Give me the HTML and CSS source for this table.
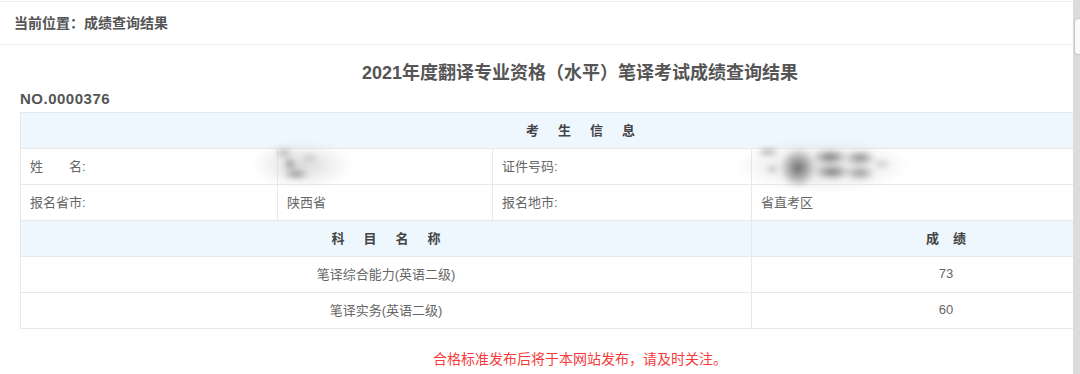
FILE: index.html
```html
<!DOCTYPE html>
<html lang="zh-CN">
<head>
<meta charset="utf-8">
<title>成绩查询结果</title>
<link rel="stylesheet" href="styles.css">
</head>
<body>
<div class="frame">
  <div class="main">
    <div class="inner">
      <div class="crumb">当前位置：成绩查询结果</div>
      <h1 class="title">2021年度翻译专业资格（水平）笔译考试成绩查询结果</h1>
      <div class="serial">NO.0000376</div>
      <table class="result">
        <colgroup>
          <col class="c1"><col class="c2"><col class="c3"><col class="c4">
        </colgroup>
        <tr class="head">
          <th colspan="4"><span class="spaced">考生信息</span></th>
        </tr>
        <tr>
          <td>姓&emsp;&emsp;名:</td>
          <td class="masked"><div class="smudge smudge-name"></div></td>
          <td>证件号码:</td>
          <td class="masked"><div class="smudge smudge-id"></div></td>
        </tr>
        <tr>
          <td>报名省市:</td>
          <td>陕西省</td>
          <td>报名地市:</td>
          <td>省直考区</td>
        </tr>
        <tr class="head">
          <th colspan="3"><span class="spaced">科目名称</span></th>
          <th><span class="spaced-sm">成绩</span></th>
        </tr>
        <tr class="center">
          <td colspan="3">笔译综合能力(英语二级)</td>
          <td>73</td>
        </tr>
        <tr class="center">
          <td colspan="3">笔译实务(英语二级)</td>
          <td>60</td>
        </tr>
      </table>
      <p class="notice">合格标准发布后将于本网站发布，请及时关注。</p>
    </div>
  </div>
  <div class="scrollbar"><div class="thumb"></div></div>
</div>
</body>
</html>
```

FILE: styles.css
```css
* { box-sizing: border-box; }
html, body { margin: 0; padding: 0; background: #fff; }
body {
  font-family: "Liberation Sans", "Noto Sans CJK SC", sans-serif;
  color: #666;
  font-size: 13px;
}
.frame {
  display: flex;
  width: 1080px;
  height: 374px;
  overflow: hidden;
}
.main {
  flex: 1;
  overflow: hidden;
}
.inner {
  width: 1160px;
  padding-top: 1px;
}
.crumb {
  height: 44px;
  border-top: 1px solid #ececec;
  border-bottom: 1px solid #ececec;
  padding-left: 14px;
  line-height: 42px;
  font-size: 14px;
  font-weight: bold;
  color: #555;
}
.title {
  margin: 14px 0 0;
  text-align: center;
  font-size: 18px;
  line-height: 28px;
  font-weight: bold;
  color: #555;
}
.serial {
  margin: 2px 0 0 20px;
  font-size: 15px;
  letter-spacing: 0.5px;
  line-height: 20px;
  font-weight: bold;
  color: #555;
}
.result {
  margin: 3px 0 0 20px;
  width: 1120px;
  table-layout: fixed;
  border-collapse: collapse;
  border: 1px solid #e3e3e3;
}
.c1 { width: 257px; }
.c2 { width: 215px; }
.c3 { width: 259px; }
.c4 { width: 389px; }
.result td, .result th {
  height: 36px;
  padding: 0 9px 2px;
  border: 1px solid #e8e8e8;
  text-align: left;
  font-weight: normal;
  white-space: nowrap;
}
.result tr.head th {
  background: #eef6fe;
  text-align: center;
  font-weight: bold;
  color: #444;
}
.result tr.center td { text-align: center; }
.spaced {
  letter-spacing: 19px;
  padding-left: 19px;
}
.spaced-sm {
  letter-spacing: 14px;
  padding-left: 14px;
}
.masked { position: relative; }
.smudge {
  position: absolute;
  filter: blur(2.5px);
  pointer-events: none;
}
.smudge-name {
  left: -26px;
  top: -9px;
  width: 100px;
  height: 50px;
  background:
    radial-gradient(ellipse 10px 7px at 32px 13px, rgba(150,150,150,0.6), transparent),
    radial-gradient(ellipse 7px 7px at 38px 24px, rgba(130,130,130,0.8), transparent),
    radial-gradient(ellipse 14px 6px at 44px 34px, rgba(120,120,120,0.75), transparent),
    radial-gradient(ellipse 10px 5px at 58px 18px, rgba(170,170,170,0.55), transparent),
    radial-gradient(ellipse 50px 24px at 50px 25px, rgba(215,215,215,0.9), transparent);
}
.smudge-id {
  left: -20px;
  top: -11px;
  width: 180px;
  height: 56px;
  background:
    radial-gradient(ellipse 12px 5px at 36px 14px, rgba(130,130,130,0.65), transparent),
    radial-gradient(ellipse 8px 5px at 40px 31px, rgba(150,150,150,0.55), transparent),
    radial-gradient(ellipse 18px 20px at 66px 30px, rgba(95,95,95,0.9), transparent),
    radial-gradient(ellipse 18px 8px at 98px 19px, rgba(105,105,105,0.85), transparent),
    radial-gradient(ellipse 18px 8px at 100px 34px, rgba(105,105,105,0.85), transparent),
    radial-gradient(ellipse 16px 8px at 128px 20px, rgba(115,115,115,0.8), transparent),
    radial-gradient(ellipse 16px 8px at 128px 35px, rgba(125,125,125,0.75), transparent),
    radial-gradient(ellipse 10px 6px at 150px 26px, rgba(160,160,160,0.5), transparent),
    radial-gradient(ellipse 90px 27px at 90px 28px, rgba(222,222,222,0.95), transparent);
}
.notice {
  margin: 20px 0 0;
  text-align: center;
  font-size: 14px;
  line-height: 20px;
  color: #f43b3b;
}
.scrollbar {
  width: 7px;
  flex: none;
  background: #dcdcdc;
  padding-top: 18px;
}
.thumb {
  margin-left: 1px;
  height: 37px;
  background: #fafafa;
  border: 1px solid #c8c8c8;
  border-right: none;
  border-radius: 4px 0 0 4px;
}
```
